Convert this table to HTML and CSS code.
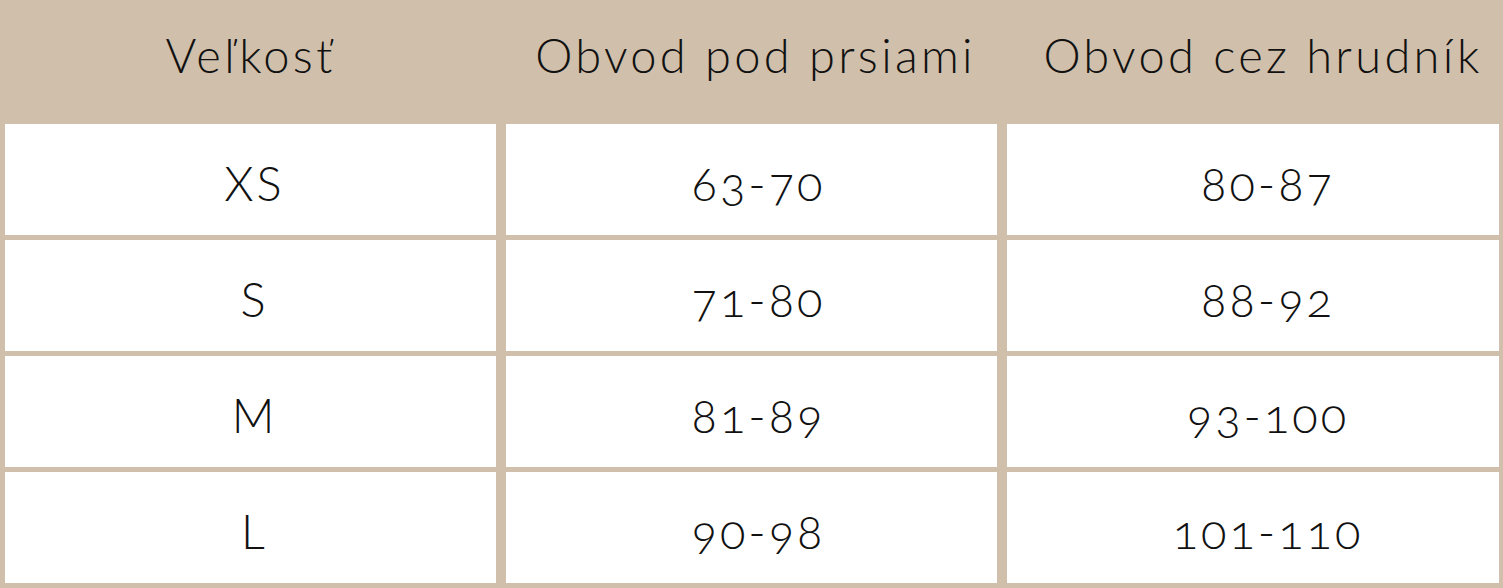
FILE: index.html
```html
<!DOCTYPE html>
<html lang="sk">
<head>
<meta charset="utf-8">
<title>Veľkosti</title>
<link rel="stylesheet" href="styles.css">
</head>
<body>
<div class="table">
  <div class="head">Veľkosť</div>
  <div class="head head-under">Obvod pod prsiami</div>
  <div class="head head-chest">Obvod cez hrudník</div>

  <div class="cell c1">XS</div>
  <div class="cell c2">63-70</div>
  <div class="cell c3">80-87</div>

  <div class="cell c1">S</div>
  <div class="cell c2">71-80</div>
  <div class="cell c3">88-92</div>

  <div class="cell c1">M</div>
  <div class="cell c2">81-89</div>
  <div class="cell c3">93-100</div>

  <div class="cell c1">L</div>
  <div class="cell c2">90-98</div>
  <div class="cell c3">101-110</div>
</div>
</body>
</html>
```
FILE: styles.css
```css
html, body {
  margin: 0;
  padding: 0;
  background: #d0bfaa;
}
.table {
  width: 1503px;
  height: 588px;
  box-sizing: border-box;
  display: grid;
  grid-template-columns: 491px 491px 492px;
  grid-template-rows: 114px 111px 111px 111px 111px;
  column-gap: 10px;
  row-gap: 5px;
  padding: 5px;
  background: #d0bfaa;
  font-family: Lato, "Open Sans", sans-serif;
  font-weight: 300;
  font-variant-numeric: oldstyle-nums;
  font-feature-settings: "onum" 1;
  color: #111;
  font-size: 47px;
  letter-spacing: 3px;
}
.head {
  display: flex;
  align-items: center;
  justify-content: center;
  padding-bottom: 15px;
  letter-spacing: 3.3px;
}
.head-under {
  padding-left: 8px;
}
.head-chest {
  padding-left: 20px;
}
.cell {
  background: #fff;
  display: flex;
  align-items: center;
  justify-content: center;
  padding-top: 6px;
}
.c1 {
  padding-left: 8px;
}
.c2 {
  padding-left: 14px;
}
.c3 {
  padding-left: 30px;
}
```
